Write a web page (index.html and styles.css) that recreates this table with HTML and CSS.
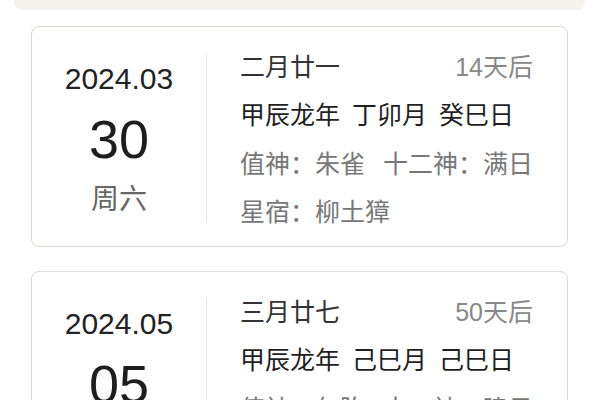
FILE: index.html
```html
<!DOCTYPE html>
<html lang="zh-CN">
<head>
<meta charset="utf-8">
<link rel="stylesheet" href="styles.css">
</head>
<body>
<div class="top-panel"></div>
<div class="list">
  <div class="card">
    <div class="date-col">
      <div class="ym">2024.03</div>
      <div class="day">30</div>
      <div class="week">周六</div>
    </div>
    <div class="info-col">
      <div class="row head"><span class="lunar">二月廿一</span><span class="after">14天后</span></div>
      <div class="row gz"><span>甲辰龙年</span><span>丁卯月</span><span>癸巳日</span></div>
      <div class="row meta"><span>值神：朱雀</span><span>十二神：满日</span></div>
      <div class="row meta"><span>星宿：柳土獐</span></div>
    </div>
  </div>
  <div class="card">
    <div class="date-col">
      <div class="ym">2024.05</div>
      <div class="day">05</div>
      <div class="week">周日</div>
    </div>
    <div class="info-col">
      <div class="row head"><span class="lunar">三月廿七</span><span class="after">50天后</span></div>
      <div class="row gz"><span>甲辰龙年</span><span>己巳月</span><span>己巳日</span></div>
      <div class="row meta"><span>值神：勾陈</span><span>十二神：建日</span></div>
      <div class="row meta"><span>星宿：角木蛟</span></div>
    </div>
  </div>
</div>
</body>
</html>
```
FILE: styles.css
```css
html, body {
  margin: 0;
  padding: 0;
  background: #ffffff;
  font-family: "Liberation Sans", "Noto Sans CJK SC", sans-serif;
}

.top-panel {
  height: 10px;
  margin: 0 15px 0 14px;
  background: #f6f2ed;
  border-radius: 0 0 8px 8px;
}

.list {
  display: flex;
  flex-direction: column;
  gap: 24px;
  padding: 16px 32px 0 31px;
}

.card {
  display: flex;
  border: 1px solid #dcd8d2;
  border-radius: 8px;
  padding: 26px 0 24px;
  background: #fff;
}

.date-col {
  width: 176px;
  height: 169px;
  border-right: 1px solid #e8e8e8;
  display: flex;
  flex-direction: column;
  align-items: center;
  justify-content: center;
  padding-top: 2px;
  box-sizing: border-box;
}

.ym {
  font-size: 30px;
  line-height: 60px;
  color: #222;
}

.day {
  font-size: 54px;
  line-height: 60px;
  color: #1e1e1e;
}

.week {
  font-family: "Noto Sans CJK SC", sans-serif;
  font-size: 28px;
  line-height: 56px;
  margin-bottom: 4px;
  color: #666;
}

.info-col {
  flex: 1;
  height: 169px;
  box-sizing: border-box;
  padding: 2px 34px 0 33px;
  display: flex;
  flex-direction: column;
  gap: 24.3px;
}

.row {
  display: flex;
  font-size: 25px;
  line-height: 24px;
  height: 24px;
  flex: none;
  white-space: nowrap;
  font-family: "Liberation Sans", "Noto Sans CJK SC", sans-serif;
}

.head {
  justify-content: space-between;
}

.lunar {
  color: #333;
}

.after {
  color: #888;
}

.gz {
  gap: 12px;
  color: #1f1f1f;
}

.meta {
  gap: 18px;
  color: #777;
}
```
